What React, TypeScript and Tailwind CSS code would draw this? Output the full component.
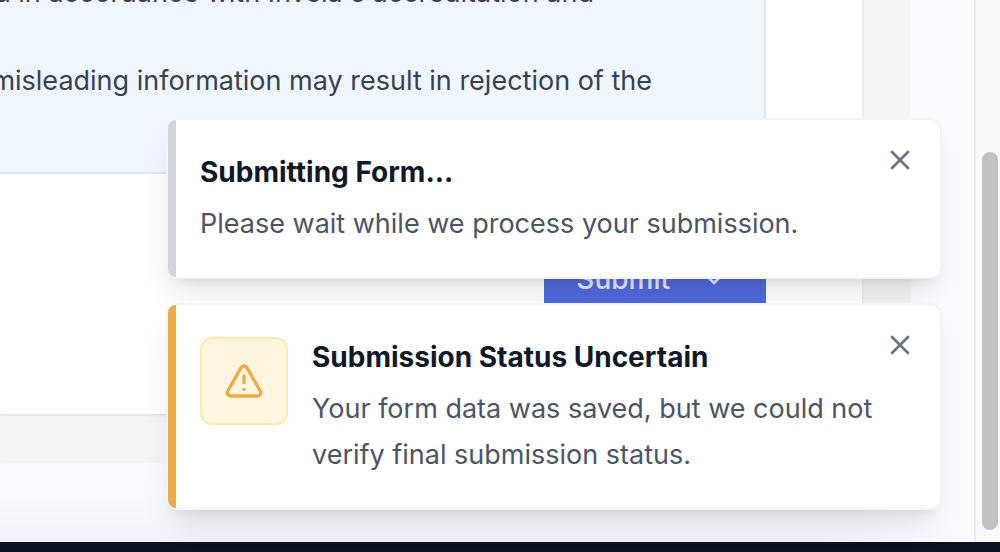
import type { ReactNode } from "react";
import { ChevronDown, TriangleAlert, X } from "lucide-react";

type ToastProps = {
  title: string;
  message: string;
  accent: string;
  icon?: ReactNode;
};

function Toast({ title, message, accent, icon }: ToastProps) {
  return (
    <section
      role="status"
      className="flex rounded-xl border-2 border-[#f3f4f6] bg-white shadow-[0_20px_30px_-6px_rgba(0,0,0,0.1),0_8px_12px_-8px_rgba(0,0,0,0.1)]"
    >
      <div className={`w-2 shrink-0 rounded-l-[10px] ${accent}`} />
      <div className="flex flex-1 items-start gap-6 pt-8 pb-[30px] pl-6">
        {icon}
        <div className="flex-1">
          <h2 className="text-[28px] leading-10 font-bold text-[#111827]">{title}</h2>
          <p className="mt-[9px] text-[27px] leading-[46px] text-[#4b5563]">{message}</p>
        </div>
      </div>
      <button
        type="button"
        aria-label="Dismiss"
        className="mt-6 mr-6 flex size-8 shrink-0 items-center justify-center self-start text-[#6b7280]"
      >
        <X className="size-8" strokeWidth={2} />
      </button>
    </section>
  );
}

export default function App() {
  return (
    <div className="relative flex h-screen flex-col overflow-hidden bg-[#fbfcff] font-['Inter',sans-serif]">
      <div className="flex min-h-0 flex-1">
        <main className="flex min-w-0 flex-1 flex-col justify-end overflow-hidden pr-16 pb-20">
          <div className="bg-[#f3f4f6] pr-12 pb-12 shadow-[0_1px_3px_rgba(0,0,0,0.06)]">
            <form className="flex flex-col gap-[66px] bg-white pr-24 pb-24 shadow-[0_1px_3px_rgba(0,0,0,0.1)]">
              <div className="flex flex-col items-end gap-[42px] border-r-2 border-b-2 border-[#dbe7fb] bg-[#eff6ff] pb-[68px] text-[27px] leading-[46px] whitespace-nowrap text-[#374151]">
                <p className="mr-[170px]">is provided in accordance with Invela's accreditation and</p>
                <p className="mr-[112px]">False or misleading information may result in rejection of the</p>
              </div>
              <button
                type="button"
                className="flex h-[78px] items-center justify-between self-end bg-[#5069dd] pr-9 pl-8 text-[28px] font-medium text-white/85"
              >
                <span className="mr-7">Submit</span>
                <ChevronDown className="size-8" />
              </button>
            </form>
          </div>
        </main>
        <div className="flex w-[26px] shrink-0 flex-col justify-end border-l-2 border-[#e8e8e8] bg-[#fafafa] pb-3 pl-1.5">
          <div className="h-[378px] w-4 rounded-full bg-[#c1c1c1]" />
        </div>
      </div>
      <footer className="h-2.5 shrink-0 bg-[#0d1220] shadow-[-120px_20px_80px_20px_rgba(0,0,0,0.09)]" />

      <div className="absolute right-[58px] bottom-[42px] flex w-[776px] flex-col gap-6">
        <Toast
          title="Submitting Form..."
          message="Please wait while we process your submission."
          accent="bg-[#d1d5db]"
        />
        <Toast
          title="Submission Status Uncertain"
          message="Your form data was saved, but we could not verify final submission status."
          accent="bg-[#edab47]"
          icon={
            <div className="flex size-[88px] shrink-0 items-center justify-center rounded-xl border-2 border-[#fdeab3] bg-[#fff6e0] text-[#edab47]">
              <TriangleAlert className="size-10" strokeWidth={2} />
            </div>
          }
        />
      </div>
    </div>
  );
}
